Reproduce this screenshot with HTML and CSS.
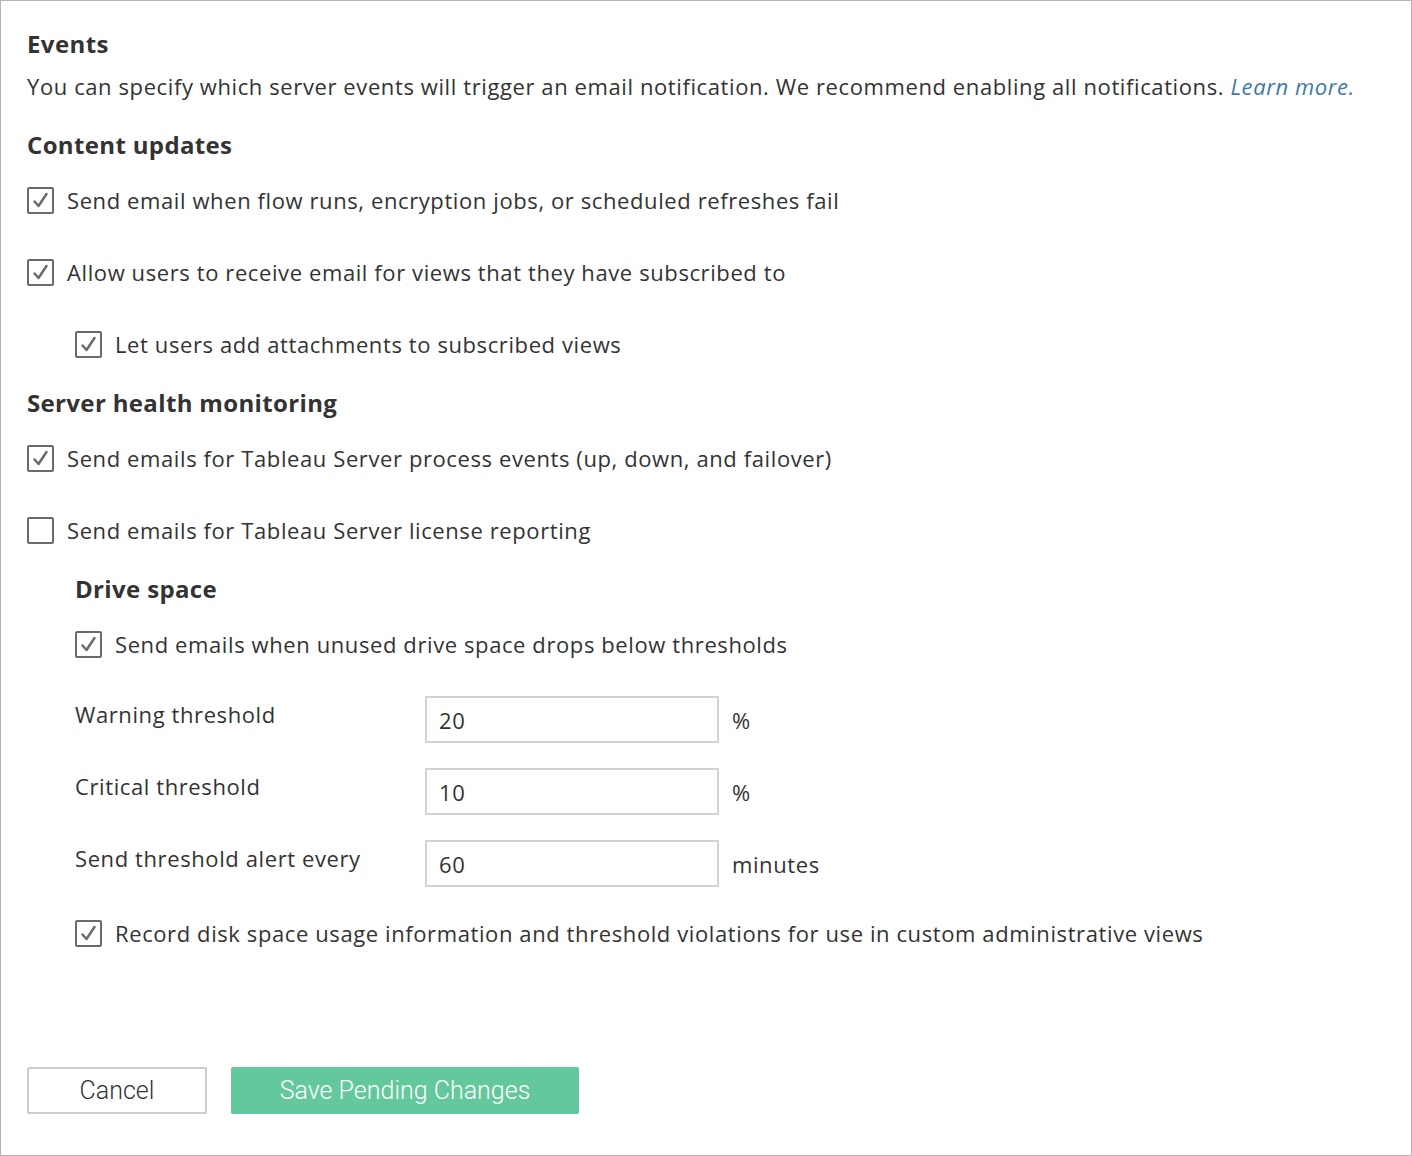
FILE: index.html
```html
<!DOCTYPE html>
<html lang="en">
<head>
<meta charset="utf-8">
<title>Events</title>
<link rel="stylesheet" href="styles.css">
</head>
<body>
<div class="page">
  <h2 class="title">Events</h2>
  <p class="desc">You can specify which server events will trigger an email notification. We recommend enabling all notifications. <a class="link" href="#">Learn more.</a></p>

  <h3 class="section">Content updates</h3>
  <label class="check first"><span class="box on"><svg viewBox="0 0 23 23" width="23" height="23"><polyline points="5.5,12.5 9.5,17 17.5,5"/></svg></span><span>Send email when flow runs, encryption jobs, or scheduled refreshes fail</span></label>
  <label class="check"><span class="box on"><svg viewBox="0 0 23 23" width="23" height="23"><polyline points="5.5,12.5 9.5,17 17.5,5"/></svg></span><span>Allow users to receive email for views that they have subscribed to</span></label>
  <label class="check indent"><span class="box on"><svg viewBox="0 0 23 23" width="23" height="23"><polyline points="5.5,12.5 9.5,17 17.5,5"/></svg></span><span>Let users add attachments to subscribed views</span></label>

  <h3 class="section">Server health monitoring</h3>
  <label class="check first"><span class="box on"><svg viewBox="0 0 23 23" width="23" height="23"><polyline points="5.5,12.5 9.5,17 17.5,5"/></svg></span><span>Send emails for Tableau Server process events (up, down, and failover)</span></label>
  <label class="check"><span class="box"></span><span>Send emails for Tableau Server license reporting</span></label>

  <div class="indent-block">
    <h3 class="section">Drive space</h3>
    <label class="check first"><span class="box on"><svg viewBox="0 0 23 23" width="23" height="23"><polyline points="5.5,12.5 9.5,17 17.5,5"/></svg></span><span>Send emails when unused drive space drops below thresholds</span></label>

    <div class="field first-field">
      <span class="field-label">Warning threshold</span>
      <span class="input">20</span>
      <span class="unit">%</span>
    </div>
    <div class="field">
      <span class="field-label">Critical threshold</span>
      <span class="input">10</span>
      <span class="unit">%</span>
    </div>
    <div class="field">
      <span class="field-label">Send threshold alert every</span>
      <span class="input">60</span>
      <span class="unit">minutes</span>
    </div>

    <label class="check after-fields"><span class="box on"><svg viewBox="0 0 23 23" width="23" height="23"><polyline points="5.5,12.5 9.5,17 17.5,5"/></svg></span><span>Record disk space usage information and threshold violations for use in custom administrative views</span></label>
  </div>

  <div class="actions">
    <button class="btn cancel" type="button">Cancel</button>
    <button class="btn save" type="button">Save Pending Changes</button>
  </div>
</div>
</body>
</html>
```

FILE: styles.css
```css
html, body {
  margin: 0;
  padding: 0;
  background: #ffffff;
}

body {
  font-family: "Open Sans", "Noto Sans", "Liberation Sans", sans-serif;
  color: #333333;
}

.page {
  box-sizing: border-box;
  width: 1412px;
  height: 1156px;
  border: 1px solid #b5b5b5;
  padding: 28px 26px 0 26px;
  display: flex;
  flex-direction: column;
}

.title {
  margin: 0;
  font-size: 24px;
  line-height: 30px;
  font-weight: 700;
  letter-spacing: 0.4px;
  color: #333333;
}

.desc {
  margin: 12px 0 0 0;
  font-size: 22px;
  line-height: 30px;
  font-weight: 400;
  letter-spacing: 0.6px;
}

.link {
  color: #3e7ba3;
  font-style: italic;
  text-decoration: none;
}

.section {
  margin: 29px 0 0 0;
  font-size: 24px;
  line-height: 30px;
  font-weight: 700;
  letter-spacing: 0.35px;
  color: #333333;
}

.check {
  display: flex;
  align-items: center;
  gap: 13px;
  margin-top: 42px;
  font-size: 22px;
  line-height: 30px;
  letter-spacing: 0.6px;
}

.check.first {
  margin-top: 25px;
}

.check.indent {
  margin-left: 48px;
}

.box {
  box-sizing: border-box;
  width: 27px;
  height: 27px;
  border: 2px solid #6b6b6b;
  border-radius: 2px;
  flex: none;
  display: flex;
}

.box svg {
  display: block;
}

.box polyline {
  fill: none;
  stroke: #6b6b6b;
  stroke-width: 2.5;
  stroke-linecap: round;
  stroke-linejoin: round;
}

.indent-block {
  margin-left: 48px;
  display: flex;
  flex-direction: column;
}

.field {
  display: flex;
  align-items: flex-start;
  margin-top: 25px;
  font-size: 22px;
  line-height: 30px;
  letter-spacing: 0.6px;
}

.field.first-field {
  margin-top: 37px;
}

.field-label {
  width: 350px;
  padding-top: 3px;
  flex: none;
}

.input {
  box-sizing: border-box;
  width: 294px;
  height: 47px;
  border: 2px solid #d2d2d2;
  padding: 0 12px;
  display: flex;
  align-items: center;
  flex: none;
}

.unit {
  margin-left: 13px;
  align-self: center;
}

.check.after-fields {
  margin-top: 31px;
}

.actions {
  margin-top: auto;
  margin-bottom: 41px;
  display: flex;
  gap: 24px;
}

.btn {
  box-sizing: border-box;
  height: 47px;
  font-family: Roboto, "Noto Sans", "Liberation Sans", sans-serif;
  font-size: 25px;
  font-weight: 300;
  border-radius: 2px;
  padding: 0;
  cursor: pointer;
}

.cancel {
  width: 180px;
  background: #ffffff;
  border: 2px solid #cccccc;
  color: #333333;
}

.save {
  width: 348px;
  background: #64c89d;
  border: none;
  color: #ffffff;
}
```
